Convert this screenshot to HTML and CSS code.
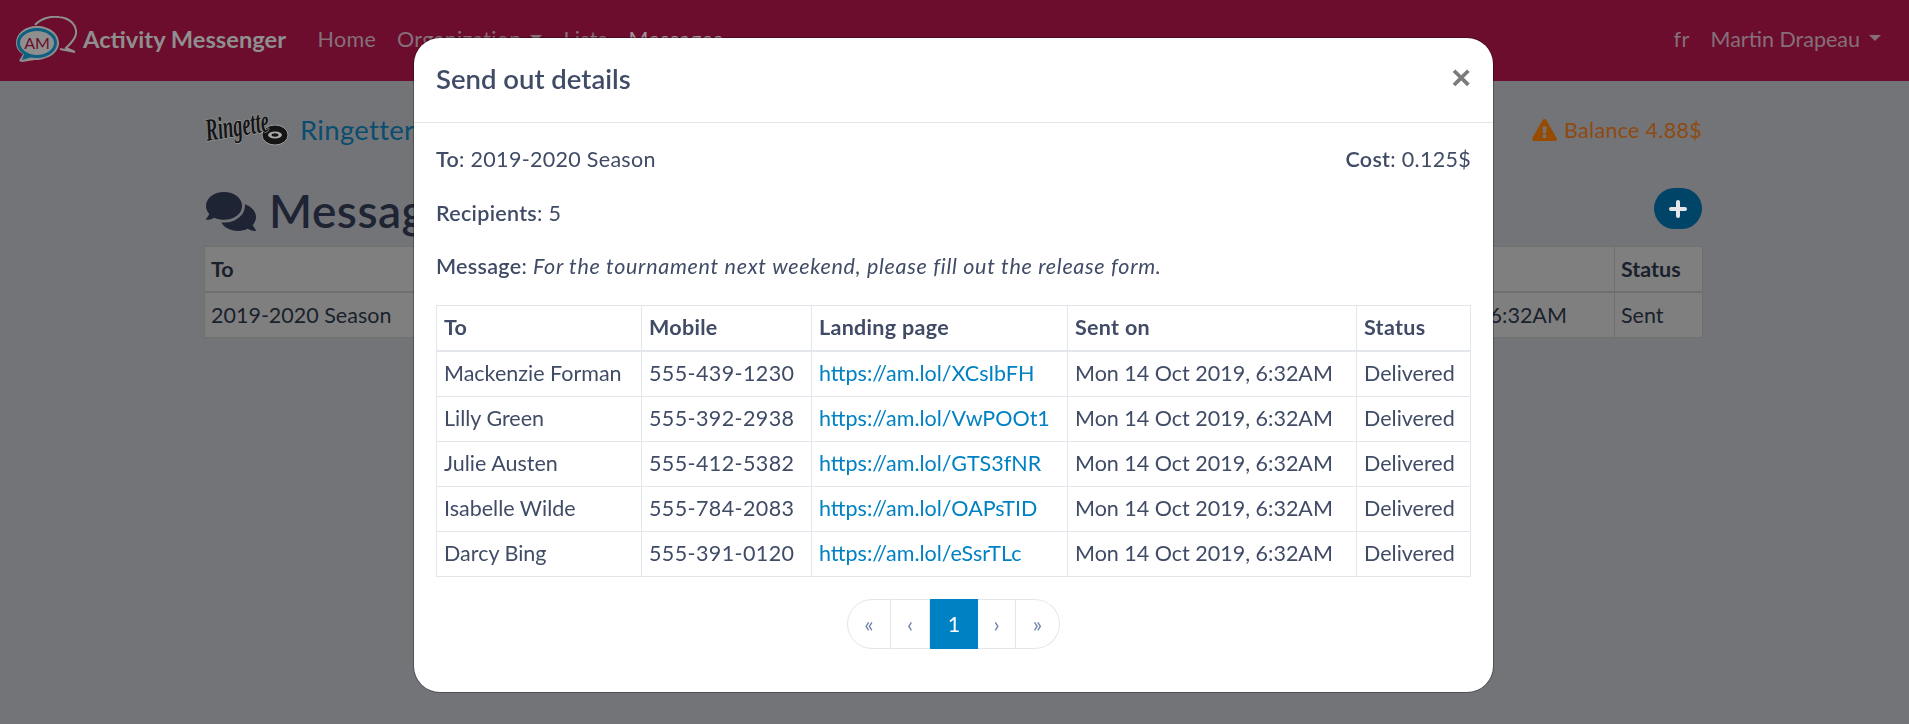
FILE: index.html
```html
<!DOCTYPE html>
<html lang="en">

<head>
    <meta charset="UTF-8">
    <meta name="viewport" content="width=device-width, initial-scale=1.0">
    <title>Activity Messenger</title>
    <link rel="stylesheet" href="styles.css">
</head>

<body>
    <nav class="navbar">
        <a href="#" class="brand">
            <svg class="brand-logo" viewBox="0 0 62 46">
                <path d="M20 9 C26 2 36 0 44 1 C55 2 62 9 61 18 C60 24 55 28 51 32 L60 36 L45 33" fill="none" stroke="#8f8f8f" stroke-width="2"/>
                <path d="M22 10 C9 10 1 18 1 27 C1 32 4 36 8 38 L4 45 L7 46 L20 44 C34 44 44 36 44 27 C44 18 35 10 22 10 Z" fill="#8f8f8f"/>
                <ellipse cx="22" cy="27" rx="18.500" ry="13.500" fill="#8f8f8f" stroke="#0e5f80" stroke-width="3"/>
                <path d="M9 38 L7 44 L17 41" fill="#0e5f80"/>
                <text x="22" y="33" class="brand-am">AM</text>
            </svg>
            Activity Messenger
        </a>
        <a href="#" class="nav-link">Home</a>
        <a href="#" class="nav-link">Organization <span class="caret"></span></a>
        <a href="#" class="nav-link">Lists</a>
        <a href="#" class="nav-link active">Messages</a>
        <div class="nav-right">
            <a href="#" class="nav-link">fr</a>
            <a href="#" class="nav-link user-link">Martin Drapeau <span class="caret"></span></a>
        </div>
    </nav>

    <div class="container">
        <div class="org-row">
            <svg class="org-logo" viewBox="0 0 84 34">
                <ellipse cx="71" cy="22" rx="13" ry="10" fill="#151515" stroke="#999" stroke-width="1"/>
                <ellipse cx="71" cy="22" rx="7" ry="3.500" fill="#aaa"/>
                <ellipse cx="71" cy="22" rx="3.500" ry="1.700" fill="#151515"/>
                <text x="3" y="28" class="org-script" textLength="64" lengthAdjust="spacingAndGlyphs" transform="rotate(-9 3 28)">Ringette</text>
            </svg>
            <a href="#" class="org-name">Ringetters</a>
            <span class="balance">
                <svg class="balance-icon" viewBox="0 0 576 512"><path d="M569.517 440.013C587.975 472.007 564.806 512 527.94 512H48.054c-36.937 0-59.999-40.055-41.577-71.987L246.423 23.985c18.467-32.009 64.72-31.951 83.154 0l239.94 416.028zM288 354c-25.405 0-46 20.595-46 46s20.595 46 46 46 46-20.595 46-46-20.595-46-46-46zm-43.673-165.346l7.418 136c.347 6.364 5.609 11.346 11.982 11.346h48.546c6.373 0 11.635-4.982 11.982-11.346l7.418-136c.375-6.874-5.098-12.654-11.982-12.654h-63.383c-6.884 0-12.356 5.78-11.981 12.654z"/></svg>
                Balance 4.88$
            </span>
        </div>

        <div class="title-row">
            <h1>
                <svg class="title-icon" viewBox="0 0 576 512"><path d="M416 192c0-88.4-93.1-160-208-160S0 103.6 0 192c0 34.3 14.1 65.9 38 92-13.4 30.2-35.5 54.2-35.8 54.5-2.2 2.3-2.8 5.7-1.5 8.7S4.8 352 8 352c36.6 0 66.9-12.3 88.7-25 32.2 15.7 70.3 25 111.3 25 114.9 0 208-71.6 208-160zm122 220c23.9-26 38-57.7 38-92 0-66.9-53.5-124.2-129.3-148.1.9 6.6 1.3 13.3 1.3 20.1 0 105.9-107.7 192-240 192-10.8 0-21.3-.8-31.700-1.900C207.8 439.6 281.8 480 368 480c41 0 79.1-9.2 111.3-25 21.8 12.7 52.1 25 88.7 25 3.2 0 6.1-1.9 7.3-4.8 1.3-2.9.7-6.3-1.5-8.7-.3-.3-22.4-24.2-35.8-54.5z"/></svg>
                Messages
            </h1>
            <button class="add-button">
                <svg viewBox="0 0 18 18"><path d="M9 2v14M2 9h14" stroke="#e4e6ea" stroke-width="4" stroke-linecap="round"/></svg>
            </button>
        </div>

        <table class="list-table">
            <colgroup>
                <col class="list-to">
                <col class="list-recipients">
                <col class="list-message">
                <col class="list-sent">
                <col class="list-status">
            </colgroup>
            <thead>
                <tr>
                    <th>To</th>
                    <th>Recipients</th>
                    <th>Message</th>
                    <th>Sent on</th>
                    <th>Status</th>
                </tr>
            </thead>
            <tbody>
                <tr>
                    <td>2019-2020 Season</td>
                    <td>5</td>
                    <td>For the tournament next weekend</td>
                    <td>Mon 14 Oct 2019, 6:32AM</td>
                    <td>Sent</td>
                </tr>
            </tbody>
        </table>
    </div>

    <div class="modal">
        <div class="modal-header">
            <h2>Send out details</h2>
            <button class="close">&times;</button>
        </div>
        <div class="modal-body">
            <div class="info-row">
                <p><b>To</b>: 2019-2020 Season</p>
                <p><b>Cost</b>: 0.125$</p>
            </div>
            <p><b>Recipients</b>: 5</p>
            <p><b>Message</b>: <i>For the tournament next weekend, please fill out the release form.</i></p>

            <table class="detail-table">
                <colgroup>
                    <col class="col-to">
                    <col class="col-mobile">
                    <col class="col-page">
                    <col class="col-sent">
                    <col class="col-status">
                </colgroup>
                <thead>
                    <tr>
                        <th>To</th>
                        <th>Mobile</th>
                        <th>Landing page</th>
                        <th>Sent on</th>
                        <th>Status</th>
                    </tr>
                </thead>
                <tbody>
                    <tr>
                        <td>Mackenzie Forman</td>
                        <td class="phone">555-439-1230</td>
                        <td><a href="#">https://am.lol/XCsIbFH</a></td>
                        <td>Mon 14 Oct 2019, 6:32AM</td>
                        <td>Delivered</td>
                    </tr>
                    <tr>
                        <td>Lilly Green</td>
                        <td class="phone">555-392-2938</td>
                        <td><a href="#">https://am.lol/VwPOOt1</a></td>
                        <td>Mon 14 Oct 2019, 6:32AM</td>
                        <td>Delivered</td>
                    </tr>
                    <tr>
                        <td>Julie Austen</td>
                        <td class="phone">555-412-5382</td>
                        <td><a href="#">https://am.lol/GTS3fNR</a></td>
                        <td>Mon 14 Oct 2019, 6:32AM</td>
                        <td>Delivered</td>
                    </tr>
                    <tr>
                        <td>Isabelle Wilde</td>
                        <td class="phone">555-784-2083</td>
                        <td><a href="#">https://am.lol/OAPsTID</a></td>
                        <td>Mon 14 Oct 2019, 6:32AM</td>
                        <td>Delivered</td>
                    </tr>
                    <tr>
                        <td>Darcy Bing</td>
                        <td class="phone">555-391-0120</td>
                        <td><a href="#">https://am.lol/eSsrTLc</a></td>
                        <td>Mon 14 Oct 2019, 6:32AM</td>
                        <td>Delivered</td>
                    </tr>
                </tbody>
            </table>

            <div class="pagination">
                <a href="#" class="page-item first">«</a>
                <a href="#" class="page-item prev">‹</a>
                <a href="#" class="page-item current">1</a>
                <a href="#" class="page-item next">›</a>
                <a href="#" class="page-item last">»</a>
            </div>
        </div>
    </div>
</body>

</html>
```

FILE: styles.css
```css
* {
    box-sizing: border-box;
}

body {
    margin: 0;
    height: 724px;
    overflow: hidden;
    font-family: Lato, "Open Sans", sans-serif;
    font-size: 21.5px;
    line-height: 30px;
    color: #1a1f2c;
    background-color: #737478;
}

a {
    text-decoration: none;
}

.navbar {
    display: flex;
    align-items: center;
    height: 81px;
    padding: 0 18px 3px 15px;
    background-color: #6c0d2d;
}

.brand {
    display: flex;
    align-items: center;
    gap: 6px;
    margin-right: 21px;
    font-size: 23.7px;
    font-weight: 700;
    color: #8f8f8f;
}

.brand-logo {
    width: 62px;
    height: 46px;
}

.brand-am {
    font-size: 16px;
    font-weight: 400;
    fill: #6c0d2d;
    text-anchor: middle;
}

.nav-link {
    padding: 0 10.500px;
    letter-spacing: 0.3px;
    color: #85707a;
}

.nav-link.active {
    color: #a3929a;
}

.nav-right {
    display: flex;
    margin-left: auto;
}

.user-link {
    letter-spacing: 0;
}

.caret {
    display: inline-block;
    margin-left: 3px;
    border-top: 6px solid currentColor;
    border-left: 6px solid transparent;
    border-right: 6px solid transparent;
    vertical-align: 6px;
}

.container {
    width: 1498px;
    margin-left: 204px;
}

.org-row {
    display: flex;
    align-items: center;
    gap: 12px;
    height: 34px;
    margin-top: 32px;
}

.org-logo {
    width: 84px;
    height: 34px;
    overflow: visible;
}

.org-script {
    font-family: "Liberation Serif", serif;
    font-size: 32px;
    font-style: italic;
    font-weight: 700;
    fill: #151515;
    stroke: #a0a0a0;
    stroke-width: 1.2px;
    paint-order: stroke;
}

.org-name {
    font-size: 27.5px;
    letter-spacing: 0.3px;
    color: #0a4d6e;
}

.balance {
    display: flex;
    align-items: center;
    gap: 7px;
    margin-left: auto;
    letter-spacing: 0.3px;
    color: #8f4a10;
}

.balance-icon {
    width: 25px;
    height: 22px;
    fill: #964b00;
}

.title-row {
    display: flex;
    align-items: center;
    justify-content: space-between;
    height: 58px;
    margin-top: 35px;
}

h1 {
    display: flex;
    align-items: center;
    gap: 13px;
    margin: 0;
    font-size: 46px;
    font-weight: 600;
    letter-spacing: 0.5px;
    line-height: 58px;
    color: #1e2434;
}

.title-icon {
    width: 50px;
    height: 45px;
    margin-left: 2px;
    fill: #1e2434;
}

.add-button {
    display: flex;
    align-items: center;
    justify-content: center;
    width: 48px;
    height: 41px;
    margin-top: -5px;
    padding: 0;
    border: none;
    border-radius: 21px;
    background-color: #004468;
}

.add-button svg {
    width: 18px;
    height: 18px;
}

.list-table {
    width: 100%;
    margin-top: 6px;
    border-collapse: collapse;
    table-layout: fixed;
    background-color: #7f7f7f;
}

.list-table th,
.list-table td {
    padding: 7px 6px;
    border: 1px solid #6f6f6f;
    text-align: left;
    white-space: nowrap;
}

.list-table th {
    border-bottom-width: 2px;
    font-weight: 700;
}

.list-to { width: 300px; }
.list-recipients { width: 200px; }
.list-message { width: 598px; }
.list-sent { width: 312px; }
.list-status { width: 88px; }

.modal {
    position: fixed;
    top: 38px;
    left: 414px;
    width: 1079px;
    height: 654px;
    border-radius: 26px;
    color: #404b66;
    background-color: #fff;
    box-shadow: 0 0 0 1px rgba(0, 0, 0, 0.3);
}

.modal-header {
    display: flex;
    align-items: center;
    justify-content: space-between;
    height: 85px;
    padding: 0 22px;
    border-bottom: 1px solid #e3e6ea;
}

h2 {
    margin: -3px 0 0;
    font-size: 27.5px;
    font-weight: 600;
    line-height: 36px;
}

.close {
    margin-top: -6px;
    padding: 0;
    border: none;
    background: none;
    font-family: "Liberation Sans", sans-serif;
    font-size: 34px;
    font-weight: 700;
    line-height: 1;
    color: #7b7b7b;
}

.modal-body {
    padding: 21px 22px 22px;
}

.modal-body p {
    margin: 0 0 23.5px;
    letter-spacing: 0.3px;
}

.modal-body i {
    letter-spacing: 0.7px;
}

.modal-body b {
    font-weight: 600;
}

.info-row {
    display: flex;
    justify-content: space-between;
}

.detail-table {
    width: 1034px;
    border-collapse: collapse;
    table-layout: fixed;
}

.detail-table th,
.detail-table td {
    padding: 6px 7px 8px;
    border: 1px solid #e3e6ea;
    text-align: left;
    white-space: nowrap;
}

.detail-table th {
    border-bottom-width: 2px;
    font-weight: 700;
    letter-spacing: 0.3px;
}

.detail-table .phone {
    letter-spacing: 0.4px;
}

.detail-table a {
    color: #0081c3;
}

.col-to { width: 205px; }
.col-mobile { width: 170px; }
.col-page { width: 256px; }
.col-sent { width: 289px; }
.col-status { width: 114px; }

.pagination {
    display: flex;
    justify-content: center;
    margin-top: 22px;
}

.page-item {
    display: flex;
    align-items: center;
    justify-content: center;
    height: 50px;
    border: 1px solid #e3e6ea;
    border-left: none;
    color: #7485ad;
    font-size: 22px;
}

.first {
    width: 44px;
    border-left: 1px solid #e3e6ea;
    border-radius: 25px 0 0 25px;
}

.prev {
    width: 39px;
}

.current {
    width: 48px;
    border: none;
    font-size: 21.5px;
    color: #fff;
    background-color: #0081c3;
}

.next {
    width: 38px;
}

.last {
    width: 44px;
    border-radius: 0 25px 25px 0;
}
```
